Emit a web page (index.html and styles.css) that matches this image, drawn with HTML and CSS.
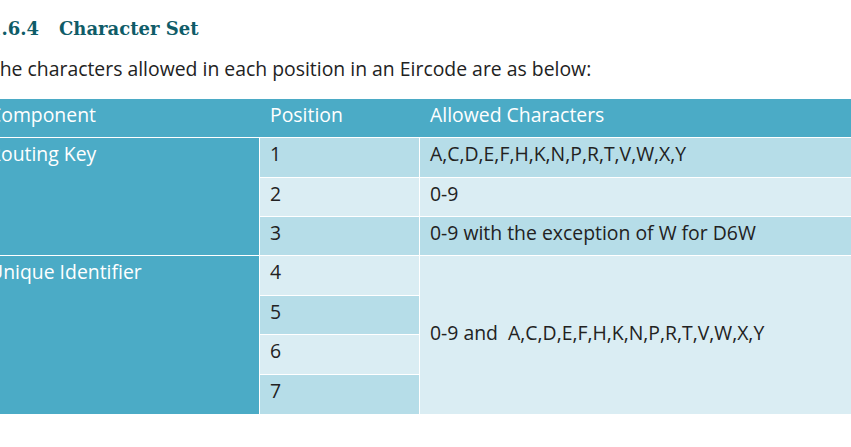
FILE: index.html
```html
<!DOCTYPE html>
<html lang="en">
<head>
<meta charset="utf-8">
<title>Character Set</title>
<link rel="stylesheet" href="styles.css">
</head>
<body>
<div class="page">
  <h2 class="heading"><span class="num">1.6.4</span><span class="title">Character Set</span></h2>
  <p class="intro">The characters allowed in each position in an Eircode are as below:</p>
  <div class="table">
    <div class="thead">
      <div class="th">Component</div>
      <div class="th">Position</div>
      <div class="th">Allowed Characters</div>
    </div>
    <div class="tbody">
      <div class="cell comp comp-routing">Routing Key</div>
      <div class="cell dark r1">1</div>
      <div class="cell dark r1">A,C,D,E,F,H,K,N,P,R,T,V,W,X,Y</div>
      <div class="cell light r2">2</div>
      <div class="cell light r2">0-9</div>
      <div class="cell dark r3">3</div>
      <div class="cell dark r3">0-9 with the exception of W for D6W</div>
      <div class="cell comp comp-unique">Unique Identifier</div>
      <div class="cell light r4">4</div>
      <div class="cell light merged">0-9 and&nbsp; A,C,D,E,F,H,K,N,P,R,T,V,W,X,Y</div>
      <div class="cell dark r5">5</div>
      <div class="cell light r6">6</div>
      <div class="cell dark r7">7</div>
    </div>
  </div>
</div>
</body>
</html>
```

FILE: styles.css
```css
html, body {
  margin: 0;
  padding: 0;
  background: #ffffff;
}

body {
  overflow: hidden;
  font-family: "Open Sans", "DejaVu Sans", sans-serif;
  color: #222222;
}

.page {
  margin-left: -11px;
  padding-top: 15px;
}

.heading {
  margin: 0;
  font-family: "DejaVu Serif", serif;
  font-weight: bold;
  font-size: 18px;
  line-height: 28px;
  color: #0f5c68;
  display: flex;
}

.heading .num {
  width: 70px;
}

.intro {
  margin: 13px 0 0 0;
  font-size: 19.4px;
  line-height: 26px;
}

.table {
  margin-top: 17px;
  margin-left: -10px;
  width: 873px;
}

.thead {
  display: grid;
  grid-template-columns: 281px 160px 1fr;
  background: #4babc6;
  height: 38px;
  color: #ffffff;
}

.th {
  padding: 4px 10px 0 10px;
  font-size: 19.4px;
  line-height: 24px;
}

.tbody {
  display: grid;
  grid-template-columns: 280px 159px 1fr;
  grid-template-rows: 39px 38px 38px 39px 38px 39px 39px;
  gap: 1px;
  background: #ffffff;
  padding-top: 1px;
}

.cell {
  padding: 4px 10px 0 10px;
  font-size: 19.4px;
  line-height: 24px;
}

.comp {
  background: #4babc6;
  color: #ffffff;
}

.comp-routing {
  grid-column: 1;
  grid-row: 1 / span 3;
}

.comp-unique {
  grid-column: 1;
  grid-row: 4 / span 4;
}

.dark {
  background: #b6dde8;
}

.light {
  background: #daedf3;
}

.merged {
  grid-column: 3;
  grid-row: 4 / span 4;
  display: flex;
  align-items: center;
  padding-top: 0;
  padding-bottom: 5px;
}
```
